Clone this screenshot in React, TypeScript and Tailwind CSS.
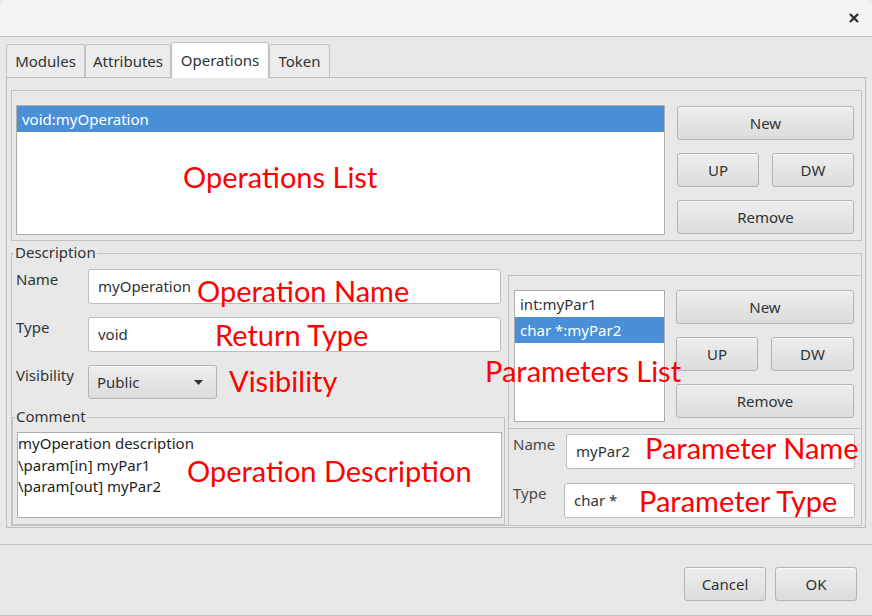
import React from "react";

const face =
  "rounded-[3px] border border-[#b4b4b4] bg-linear-to-b from-[#eeeeee] to-[#dcdcdc] text-[15px] text-[#2e3436] shadow-[inset_0_1px_0_#f8f8f8]";
const btn = `flex items-center justify-center ${face}`;
const input = "flex items-center rounded-[3px] border border-[#bdbdbd] bg-white pl-[9px] text-[15px]";
const note = "absolute whitespace-nowrap font-['Lato',sans-serif] text-[29px] leading-none text-[#ff0000]";

function Tab({ label, active = false, w }: { label: string; active?: boolean; w: string }) {
  if (active) {
    return (
      <div className={`${w} relative z-10 -mb-px flex h-[36px] items-center justify-center rounded-t-[3px] border border-b-0 border-[#bdbdbd] bg-white`}>
        {label}
      </div>
    );
  }
  return (
    <div className={`${w} flex h-[33px] items-center justify-center rounded-t-[3px] border border-b-0 border-[#c4c4c4] bg-[#ececec] pt-[1px]`}>
      {label}
    </div>
  );
}

export default function App() {
  return (
    <div className="relative flex h-[616px] w-[872px] flex-col overflow-hidden bg-[#e8e8e8] font-['Noto_Sans',sans-serif] text-[15px] text-[#2e3436]">
      {/* title bar */}
      <div className="flex h-[37px] shrink-0 items-center justify-end rounded-t-[6px] border-b border-[#c6c6c6] bg-[#f3f3f3] pr-[13px]">
        <svg width="10" height="10" viewBox="0 0 10 10">
          <path d="M1 1L9 9M9 1L1 9" stroke="#2e3436" strokeWidth="2.4" />
        </svg>
      </div>

      <div className="px-[6px] pt-[5px]">
        <div className="flex h-[35px] items-end">
          <Tab label="Modules" w="w-[79px]" />
          <Tab label="Attributes" w="w-[86px]" />
          <Tab label="Operations" w="w-[98px]" active />
          <Tab label="Token" w="w-[61px]" />
        </div>

        {/* tab panel */}
        <div className="h-[451px] border border-[#bdbdbd] pl-[4px] pt-[12px]">
          {/* operations group */}
          <div className="flex h-[151px] w-[851px] border border-[#c2c2c2] pl-[4px] pt-[14px]">
            <div className="h-[130px] w-[649px] border border-[#aeaeae] bg-white">
              <div className="flex h-[26px] items-center bg-[#4a90d9] pl-[5px] text-white">void:myOperation</div>
            </div>
            <div className="ml-[12px] mt-[1px] flex w-[177px] flex-col gap-[13px]">
              <div className={`${btn} h-[34px]`}>New</div>
              <div className="flex gap-[13px]">
                <div className={`${btn} h-[34px] w-[82px]`}>UP</div>
                <div className={`${btn} h-[34px] w-[82px]`}>DW</div>
              </div>
              <div className={`${btn} h-[34px]`}>Remove</div>
            </div>
          </div>

          {/* description group */}
          <div className="relative mt-[12px] flex h-[273px] w-[851px] border border-[#c2c2c2]">
            <div className="absolute left-[2px] top-[-11px] bg-[#e8e8e8] px-[1px] leading-[18px]">Description</div>

            <div className="flex w-[493px] flex-col">
              <div className="flex flex-col gap-[13px] pl-[4px] pt-[15px]">
                <div className="flex">
                  <div className="w-[72px] leading-[20px]">Name</div>
                  <div className={`${input} h-[35px] w-[413px]`}>myOperation</div>
                </div>
                <div className="flex">
                  <div className="w-[72px] leading-[20px]">Type</div>
                  <div className={`${input} h-[35px] w-[413px]`}>void</div>
                </div>
                <div className="flex">
                  <div className="w-[72px] leading-[20px]">Visibility</div>
                  <div className={`${face} flex h-[34px] w-[129px] items-center justify-between pl-[8px] pr-[13px]`}>
                    <span>Public</span>
                    <svg width="9" height="5" viewBox="0 0 9 5">
                      <path d="M0 0H9L4.5 5Z" fill="#2e3436" />
                    </svg>
                  </div>
                </div>
              </div>

              {/* comment group */}
              <div className="relative mt-[18px] h-[109px] w-[493px] border border-[#c2c2c2] pl-[4px] pt-[14px]">
                <div className="absolute left-[2px] top-[-11px] bg-[#e8e8e8] px-[1px] leading-[18px]">Comment</div>
                <div className="h-[86px] w-[485px] border border-[#aeaeae] bg-white leading-[21.5px] text-[#1e1e1e]">
                  <div>myOperation description</div>
                  <div>\param[in] myPar1</div>
                  <div>\param[out] myPar2</div>
                </div>
              </div>
            </div>

            {/* parameters column */}
            <div className="ml-[3px] mt-[21px] flex flex-1 flex-col border-l border-t border-[#c2c2c2]">
              <div className="flex h-[153px] border-b border-[#c2c2c2] pl-[5px] pt-[14px]">
                <div className="h-[132px] w-[151px] border border-[#aeaeae] bg-white">
                  <div className="flex h-[26px] items-center pl-[5px]">int:myPar1</div>
                  <div className="flex h-[26px] items-center bg-[#4a90d9] pl-[5px] text-white">char *:myPar2</div>
                </div>
                <div className="ml-[11px] flex w-[178px] flex-col gap-[13px]">
                  <div className={`${btn} h-[34px]`}>New</div>
                  <div className="flex gap-[13px]">
                    <div className={`${btn} h-[34px] w-[82px]`}>UP</div>
                    <div className={`${btn} h-[34px] w-[83px]`}>DW</div>
                  </div>
                  <div className={`${btn} h-[34px]`}>Remove</div>
                </div>
              </div>
              <div className="flex flex-col gap-[14px] pl-[4px] pt-[5px]">
                <div className="flex">
                  <div className="w-[53px] leading-[20px] text-[#4a4a4a]">Name</div>
                  <div className={`${input} h-[35px] w-[289px]`}>myPar2</div>
                </div>
                <div className="flex">
                  <div className="w-[51px] leading-[20px] text-[#4a4a4a]">Type</div>
                  <div className={`${input} h-[35px] w-[291px]`}>char *</div>
                </div>
              </div>
            </div>
          </div>
        </div>
      </div>

      {/* bottom buttons */}
      <div className="mt-[16px] flex flex-1 justify-end gap-[9px] border-b border-t border-[#c4c4c4] pr-[15px] pt-[22px]">
        <div className={`${btn} h-[34px] w-[82px]`}>Cancel</div>
        <div className={`${btn} h-[34px] w-[82px]`}>OK</div>
      </div>

      {/* annotations */}
      <div className={`${note} left-[183px] top-[162px]`}>Operations List</div>
      <div className={`${note} left-[197px] top-[276px]`}>Operation Name</div>
      <div className={`${note} left-[215px] top-[320px]`}>Return Type</div>
      <div className={`${note} left-[229px] top-[366px]`}>Visibility</div>
      <div className={`${note} left-[485px] top-[356px]`}>Parameters List</div>
      <div className={`${note} left-[187px] top-[456px]`}>Operation Description</div>
      <div className={`${note} left-[645px] top-[433px]`}>Parameter Name</div>
      <div className={`${note} left-[639px] top-[486px]`}>Parameter Type</div>
    </div>
  );
}
